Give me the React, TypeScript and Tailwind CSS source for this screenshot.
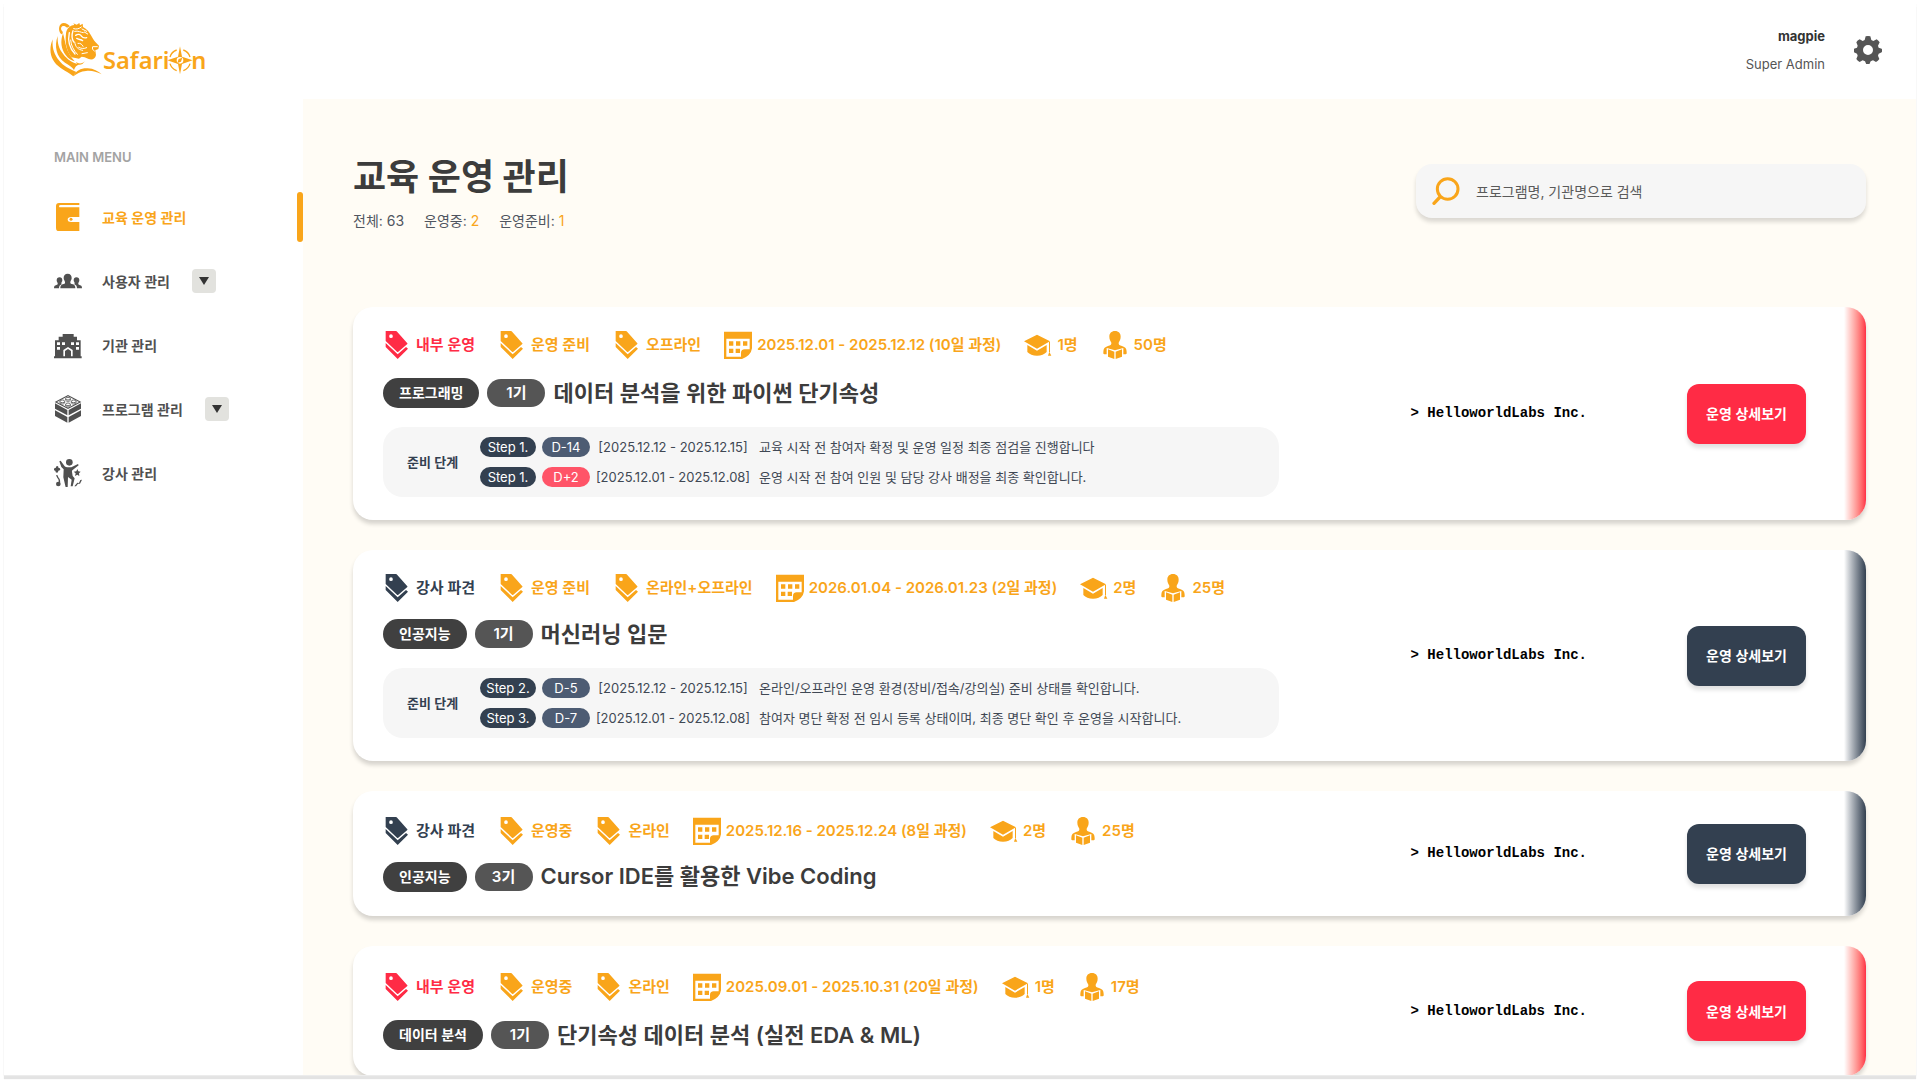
import type { ReactNode } from 'react';

type Tone = 'red' | 'navy';

type Step = {
  step: string;
  dday: string;
  late?: boolean;
  period: string;
  text: string;
};

type Program = {
  tone: Tone;
  owner: string;
  status: string;
  mode: string;
  period: string;
  teachers: string;
  students: string;
  category: string;
  round: string;
  title: string;
  org: string;
  steps: Step[];
};

const programs: Program[] = [
  {
    tone: 'red',
    owner: '내부 운영',
    status: '운영 준비',
    mode: '오프라인',
    period: '2025.12.01 - 2025.12.12 (10일 과정)',
    teachers: '1명',
    students: '50명',
    category: '프로그래밍',
    round: '1기',
    title: '데이터 분석을 위한 파이썬 단기속성',
    org: 'HelloworldLabs Inc.',
    steps: [
      {
        step: 'Step 1.',
        dday: 'D-14',
        period: '[2025.12.12 - 2025.12.15]',
        text: '교육 시작 전 참여자 확정 및 운영 일정 최종 점검을 진행합니다',
      },
      {
        step: 'Step 1.',
        dday: 'D+2',
        late: true,
        period: '[2025.12.01 - 2025.12.08]',
        text: '운영 시작 전 참여 인원 및 담당 강사 배정을 최종 확인합니다.',
      },
    ],
  },
  {
    tone: 'navy',
    owner: '강사 파견',
    status: '운영 준비',
    mode: '온라인+오프라인',
    period: '2026.01.04 - 2026.01.23 (2일 과정)',
    teachers: '2명',
    students: '25명',
    category: '인공지능',
    round: '1기',
    title: '머신러닝 입문',
    org: 'HelloworldLabs Inc.',
    steps: [
      {
        step: 'Step 2.',
        dday: 'D-5',
        period: '[2025.12.12 - 2025.12.15]',
        text: '온라인/오프라인 운영 환경(장비/접속/강의실) 준비 상태를 확인합니다.',
      },
      {
        step: 'Step 3.',
        dday: 'D-7',
        period: '[2025.12.01 - 2025.12.08]',
        text: '참여자 명단 확정 전 임시 등록 상태이며, 최종 명단 확인 후 운영을 시작합니다.',
      },
    ],
  },
  {
    tone: 'navy',
    owner: '강사 파견',
    status: '운영중',
    mode: '온라인',
    period: '2025.12.16 - 2025.12.24 (8일 과정)',
    teachers: '2명',
    students: '25명',
    category: '인공지능',
    round: '3기',
    title: 'Cursor IDE를 활용한 Vibe Coding',
    org: 'HelloworldLabs Inc.',
    steps: [],
  },
  {
    tone: 'red',
    owner: '내부 운영',
    status: '운영중',
    mode: '온라인',
    period: '2025.09.01 - 2025.10.31 (20일 과정)',
    teachers: '1명',
    students: '17명',
    category: '데이터 분석',
    round: '1기',
    title: '단기속성 데이터 분석 (실전 EDA & ML)',
    org: 'HelloworldLabs Inc.',
    steps: [],
  },
];

const tones = {
  red: {
    text: 'text-[#ff2b45]',
    button: 'bg-[#ff2b45]',
    strip: 'to-[#ff2b45]',
    card: 'min-h-[130px]',
    rows: 'gap-[19px]',
  },
  navy: {
    text: 'text-[#334050]',
    button: 'bg-[#334050]',
    strip: 'to-[#334050]',
    card: 'min-h-[125px]',
    rows: 'gap-[17px]',
  },
};

function Icon({ children }: { children: ReactNode }) {
  return (
    <svg viewBox="0 0 84 84" className="size-7 shrink-0" fill="currentColor" aria-hidden="true">
      {children}
    </svg>
  );
}

function TagIcon() {
  return (
    <Icon>
      <path
        fillRule="evenodd"
        d="M8 0h30q2 0 3 1l32 36q1 1 0 2L46 62q-2 2-4 0L8 30zM24 10a5.500 5.500 0 1 0 0 11 5.500 5.500 0 0 0 0-11z"
      />
      <path d="M8 36l36 34 25-22 6 5-31 31L8 48z" />
    </Icon>
  );
}

function CalendarIcon() {
  return (
    <Icon>
      <path
        fillRule="evenodd"
        d="M0 2h84v50q-3 22-30 32H0zM7 23v54h44V66q0-11 11-11h15V23z"
      />
      <path d="M15 31h13v13H15zM36 31h13v13H36zM57 31h13v13H57zM15 53h13v13H15zM35 53h13v13H35z" />
    </Icon>
  );
}

function CapIcon() {
  return (
    <Icon>
      <path d="M0 31L39 11l39 20-39 22zM10 42l29 17 29-17v21q-10 11-29 11T10 63z" />
      <path d="M75 32h3v31h-3zM76 62l6 12H72z" />
    </Icon>
  );
}

function ReaderIcon() {
  return (
    <Icon>
      <path d="M42 0c11 0 17 7 17 17 0 9-4 13-6 18-1 6 3 8 10 10 10 3 14 8 14 18v4q0 3-3 3h-7V51L42 58 17 51v19h-7q-3 0-3-3v-4c0-10 4-15 14-18 7-2 11-4 10-10-2-5-6-9-6-18C25 7 31 0 42 0z" />
      <path d="M21 55l19 7v22l-19-7zM63 55l-19 7v22l19-7z" />
    </Icon>
  );
}

function BookIcon() {
  return (
    <Icon>
      <path
        fillRule="evenodd"
        d="M15 0h61v6H20q-5 0-5 3.500T20 13h56v29H52q-11 0-11 7.500T52 57h24v28H16Q6 85 6 75V9q0-9 9-9z"
      />
      <circle cx="51" cy="49" r="4.500" />
    </Icon>
  );
}

function UsersIcon() {
  return (
    <Icon>
      <path d="M41 20c8 0 12 5 12 13 0 5-3 8-4 12-1 5 3 6 8 7 5 2 7 5 7 12H19c0-7 2-10 7-12 5-1 8-2 7-7-1-4-4-7-4-12 0-8 4-13 12-13z" />
      <path d="M17 31c5 0 8 3 8 9 0 4-3 6-3 9 0 2 2 2 1 3-6 2-8 6-8 12H0c0-6 2-8 6-9 4-2 6-2 5-6-1-3-3-5-3-9 0-6 3-9 9-9zM67 31c-5 0-8 3-8 9 0 4 3 6 3 9 0 2-2 2-1 3 6 2 8 6 8 12h15c0-6-2-8-6-9-4-2-6-2-5-6 1-3 3-5 3-9 0-6-3-9-9-9z" />
    </Icon>
  );
}

function BuildingIcon() {
  return (
    <Icon>
      <path
        fillRule="evenodd"
        d="M26 9h33v8h10v11h11v48h3v6H0v-6h3V28h11V17h12zM9 34v8h9v-8zM24 34v8h9v-8zM51 34v8h9v-8zM66 34v8h9v-8zM9 48v8h9v-8zM66 48v8h9v-8zM28 76h5V60l9-6 9 6v16h5V57l-14-9-14 9z"
      />
    </Icon>
  );
}

function BrickIcon() {
  return (
    <Icon>
      <path d="M42 0l40 21-40 21L2 21z" />
      <path d="M3 25l37 20v16L3 41zM81 25L44 45v16l37-20zM3 46l37 20v17L3 63zM81 46L44 66v17l37-20z" />
      <path d="M42 4l33 17-33 17L9 21z" fill="white" />
      <g fill="white" stroke="currentColor" strokeWidth="2.500">
        <path d="M35 11v5c2 4 12 4 14 0v-5M18 19v5c2 4 12 4 14 0v-5M52 19v5c2 4 12 4 14 0v-5M35 28v5c2 4 12 4 14 0v-5" />
        <ellipse cx="42" cy="11" rx="7" ry="4" />
        <ellipse cx="25" cy="19" rx="7" ry="4" />
        <ellipse cx="59" cy="19" rx="7" ry="4" />
        <ellipse cx="42" cy="28" rx="7" ry="4" />
      </g>
    </Icon>
  );
}

function DancerIcon() {
  return (
    <Icon>
      <circle cx="46" cy="10" r="10" />
      <path d="M16 7l4-2 12 17q3 3 8 3h12l20-10 2 4-18 14q-3 2-2 6l2 12 6 7-6 24h-6l3-20-11-8-1 31h-6l-7-30 1-24-7-7z" />
      <path d="M6 23q4-4 7 0 0 3 0 3 6 0 6 5 0 4-6 4 0 6-4 6-5 0-5-6-5 0-4-5 1-4 6-4zM70 30l3 7 7 1-5 5 1 8-6-4-7 4 2-8-6-5 8-1z" />
      <circle cx="13" cy="75" r="7" />
      <path d="M6 49l4-1 4 8q6 4 4 18l-4 1 0-10q0-5-4-8zM61 82l9-11 5 1 4-9 5-1-6 12-6 0-6 8z" />
    </Icon>
  );
}

function GearIcon() {
  return (
    <Icon>
      <path
        fillRule="evenodd"
        d="M35 1q7-2 14 0l3 11 6 3 10-5q6 4 9 9l-5 10 2 6 9 3q3 5 0 11l-9 4-2 6 4 10q-4 6-10 9l-9-5-7 3-4 9q-5 1-9 0l-4-9-7-3-9 5q-6-3-10-9l4-10-2-6-9-4q-2-6 0-11l9-3 2-6-4-10q3-6 10-9l9 5 6-3zM42 27a15 15 0 1 0 0 30 15 15 0 0 0 0-30z"
      />
    </Icon>
  );
}

function SearchIcon() {
  return (
    <svg viewBox="0 0 84 84" className="size-7 shrink-0" fill="none" stroke="#f9a51a" strokeLinecap="round" aria-hidden="true">
      <circle cx="47" cy="36" r="31" strokeWidth="9" />
      <path d="M24 60L6 79" strokeWidth="10" />
    </svg>
  );
}

function Logo() {
  return (
    <svg viewBox="150 66 468 165" className="h-[55px] w-[156px]" fill="#f9a51a" role="img" aria-label="Safarion">
      {/* neck and mane */}
      <path d="M158 118c-14 34-6 66 24 86 16 11 30 17 38 25 2-5 5-9 9-13-22-10-40-18-53-36-15-19-20-38-18-62z" />
      <path d="M173 108c-11 32-4 62 22 80 12 8 22 12 27 22 3-9 8-14 16-17-21-4-36-14-48-30-14-18-18-34-17-55z" />
      <path d="M189 100c-9 24-5 48 8 65 8 11 17 17 27 19-12-14-19-25-24-40-5-16-7-30-11-44z" />
      <path d="M220 229c8-18 24-25 43-24 18 1 31 8 42 18-16-8-31-12-47-10-15 1-28 8-38 16z" />
      <path d="M228 186c8 6 19 6 28-3l-9 9c-9 5-16 2-19-6z" />
      {/* ear */}
      <path d="M179 96c-5-13 1-27 12-27 8 0 14 5 19 10l-9 4c-6-6-14-7-17-1-2 5 0 9 3 12 2 3 2 6-1 9-3-1-6-4-7-7z" />
      {/* head */}
      <path d="M198 101c1-14 11-25 25-26l-3-5 10 4 8-5 2 7 8-5 1 10c10 5 18 13 22 22 5 7 9 17 15 23l11 11-2 10-9 4 2 14c-2 11-11 16-22 12l-12-5-9-2-8 6-22-4c-13-15-21-42-17-71z" />
      <g fill="none" stroke="white" strokeLinecap="round">
        <path d="M208 98c-5 23 0 46 17 64M219 92c-5 14-3 25 2 34" strokeWidth="4" />
        <path d="M224 126c2 15 10 23 24 25M212 120c1 17 9 31 20 43" strokeWidth="3" />
        <path d="M221 86c9 3 17 0 23-5M224 94c11-3 19 4 26 4M246 87l14 7M253 96l10 6" strokeWidth="3" />
        <path d="M227 106c7-5 14-3 18 3s10 5 15 4M230 115c5 4 13 3 18 7" strokeWidth="4" />
        <path d="M234 130c8-1 12 3 15 9M236 142c8 4 16 5 24 1" strokeWidth="3" />
        <path d="M292 140l-14 0c-2 6 0 10 5 13M262 158l-16 3" strokeWidth="3" />
      </g>
      {/* wordmark */}
      <text x="309" y="207" fontSize="71" fontWeight="600" fontFamily="Noto Sans, sans-serif">
        Safari
      </text>
      <path
        d="M510 171a32 32 0 0 1 20-21M550 150a32 32 0 0 1 20 21M570 191a32 32 0 0 1-20 21M530 212a32 32 0 0 1-20-21"
        fill="none"
        stroke="#f9a51a"
        strokeWidth="4"
      />
      <path
        fillRule="evenodd"
        d="M540 139l6 31 32 11-32 11-6 31-6-31-32-11 32-11zM540 171a10 10 0 1 0 0 20 10 10 0 0 0 0-20z"
      />
      <path d="M547 173l-4 12-11 4 4-12z" />
      <text x="574" y="207" fontSize="71" fontWeight="600" fontFamily="Noto Sans, sans-serif">
        n
      </text>
    </svg>
  );
}

const menu = [
  { label: '교육 운영 관리', icon: <BookIcon />, active: true, sub: false },
  { label: '사용자 관리', icon: <UsersIcon />, active: false, sub: true },
  { label: '기관 관리', icon: <BuildingIcon />, active: false, sub: false },
  { label: '프로그램 관리', icon: <BrickIcon />, active: false, sub: true },
  { label: '강사 관리', icon: <DancerIcon />, active: false, sub: false },
];

function Sidebar() {
  return (
    <aside className="w-[299px] shrink-0 pt-[46px]">
      <h2 className="pl-[50px] text-[13px] leading-6 font-semibold text-[#a3a3a3]">MAIN MENU</h2>
      <nav className="mt-[23px]">
        <ul className="flex flex-col gap-[14px]">
          {menu.map((item) => (
            <li
              key={item.label}
              className={`flex h-[50px] items-center pl-[50px] ${item.active ? 'text-[#f9a51a]' : 'text-[#505050]'}`}
            >
              <a href="#" className="flex items-center gap-5 text-[14px] font-semibold">
                {item.icon}
                {item.label}
              </a>
              {item.sub && (
                <button
                  type="button"
                  aria-label={`${item.label} 펼치기`}
                  className="ml-[22px] flex size-6 items-center justify-center rounded bg-[#e2e2de] text-[#333]"
                >
                  <svg viewBox="0 0 10 8" className="h-2 w-2.5" fill="currentColor" aria-hidden="true">
                    <path d="M0 0h10L5 8z" />
                  </svg>
                </button>
              )}
              {item.active && <span className="ml-auto h-full w-1.5 rounded-[3px] bg-[#f9a51a]" />}
            </li>
          ))}
        </ul>
      </nav>
    </aside>
  );
}

function Meta({ icon, className = '', children }: { icon: ReactNode; className?: string; children: ReactNode }) {
  return (
    <span className={`flex items-center gap-[5px] ${className}`}>
      {icon}
      {children}
    </span>
  );
}

function StepPanel({ steps }: { steps: Step[] }) {
  return (
    <div className="flex max-w-[896px] items-center rounded-[20px] bg-[#f6f6f6] py-2.5 pl-6 text-[13px] leading-5 text-[#404854]">
      <span className="w-[73px] shrink-0 font-semibold text-[#334050]">준비 단계</span>
      <ul className="flex flex-col gap-2.5">
        {steps.map((s) => (
          <li key={s.period} className="flex items-center whitespace-nowrap">
            <span className="h-5 w-14 rounded-full bg-[#334050] text-center text-white">{s.step}</span>
            <span
              className={`ml-1.5 h-5 w-12 rounded-full text-center text-white ${s.late ? 'bg-[#ff5468]' : 'bg-[#4d5c73]'}`}
            >
              {s.dday}
            </span>
            <span className="ml-1 w-[158px] text-center">{s.period}</span>
            <span className="ml-[7px]">{s.text}</span>
          </li>
        ))}
      </ul>
    </div>
  );
}

function ProgramCard({ program }: { program: Program }) {
  const tone = tones[program.tone];
  return (
    <article
      className={`flex shrink-0 items-center overflow-hidden rounded-[20px] bg-white pl-[30px] shadow-[0_4px_4px_rgba(0,0,0,0.16)] ${tone.card}`}
    >
      <div className="flex min-w-0 flex-1 flex-col gap-[19px] pt-6 pb-[23px]">
        <div className={`flex flex-col ${tone.rows}`}>
          <div className="flex items-center gap-[23px] text-[15px] leading-7 font-semibold whitespace-nowrap text-[#f9a51a]">
            <Meta icon={<TagIcon />} className={tone.text}>
              {program.owner}
            </Meta>
            <Meta icon={<TagIcon />}>{program.status}</Meta>
            <Meta icon={<TagIcon />}>{program.mode}</Meta>
            <Meta icon={<CalendarIcon />}>{program.period}</Meta>
            <Meta icon={<CapIcon />}>{program.teachers}</Meta>
            <Meta icon={<ReaderIcon />}>{program.students}</Meta>
          </div>
          <div className="flex h-[30px] items-center gap-2 whitespace-nowrap">
            <span className="rounded-full bg-[#404040] px-4 text-[14px] leading-[30px] font-semibold text-white">
              {program.category}
            </span>
            <span className="w-[58px] rounded-full bg-[#555] text-center text-[15px] leading-7 font-semibold text-white">
              {program.round}
            </span>
            <h3 className="text-[22px] font-semibold text-[#3c3c3c]">{program.title}</h3>
          </div>
        </div>
        {program.steps.length > 0 && <StepPanel steps={program.steps} />}
      </div>
      <p className="mr-[100px] font-['Liberation_Mono',monospace] text-[14px] font-bold whitespace-nowrap text-black">
        &gt; {program.org}
      </p>
      <button
        type="button"
        className={`h-[60px] w-[119px] rounded-xl text-[14px] font-semibold whitespace-nowrap text-white shadow-[0_4px_4px_rgba(0,0,0,0.12)] ${tone.button}`}
      >
        운영 상세보기
      </button>
      <span className={`ml-[38px] w-[22px] self-stretch bg-linear-to-r from-white ${tone.strip}`} />
    </article>
  );
}

export default function App() {
  return (
    <div className="h-screen bg-white px-1 pt-[3px] pb-2 font-['Inter','Noto_Sans_CJK_KR',sans-serif]">
      <div className="flex h-full flex-col overflow-hidden bg-white shadow-[0_1px_1px_#ececec,0_4px_1px_#e3e3e3]">
        <header className="flex h-24 shrink-0 items-center justify-between pr-[34px] pb-[3px] pl-[46px]">
          <a href="#">
            <Logo />
          </a>
          <div className="flex items-center gap-[29px]">
            <div className="text-right text-[13px] leading-7">
              <p className="font-bold text-[#333]">magpie</p>
              <p className="text-[#555]">Super Admin</p>
            </div>
            <button type="button" aria-label="설정" className="text-[#555]">
              <GearIcon />
            </button>
          </div>
        </header>

        <div className="flex min-h-0 flex-1">
          <Sidebar />
          <main className="flex min-w-0 flex-1 flex-col overflow-hidden bg-[#fffcf5] px-[50px] pt-[54px]">
            <div className="flex h-[154px] shrink-0 items-start justify-between">
              <div>
                <h1 className="text-[36px] leading-12 font-bold text-[#3c3c3c]">교육 운영 관리</h1>
                <p className="mt-2 flex gap-5 text-[14px] leading-6 text-[#505560]">
                  <span>전체: 63</span>
                  <span>
                    운영중: <span className="text-[#f9a51a]">2</span>
                  </span>
                  <span>
                    운영준비: <span className="text-[#f9a51a]">1</span>
                  </span>
                </p>
              </div>
              <label className="mt-[11px] flex h-[54px] w-[450px] items-center gap-4 rounded-2xl bg-[#f6f6f6] px-4 shadow-[0_4px_4px_rgba(0,0,0,0.14)]">
                <SearchIcon />
                <input
                  type="search"
                  aria-label="프로그램 검색"
                  placeholder="프로그램명, 기관명으로 검색"
                  className="min-w-0 flex-1 bg-transparent text-[14px] text-[#333] outline-none placeholder:text-[#5a5a5a]"
                />
              </label>
            </div>

            <section className="flex flex-col gap-[30px]">
              {programs.map((program) => (
                <ProgramCard key={program.title} program={program} />
              ))}
            </section>
          </main>
        </div>
      </div>
    </div>
  );
}
